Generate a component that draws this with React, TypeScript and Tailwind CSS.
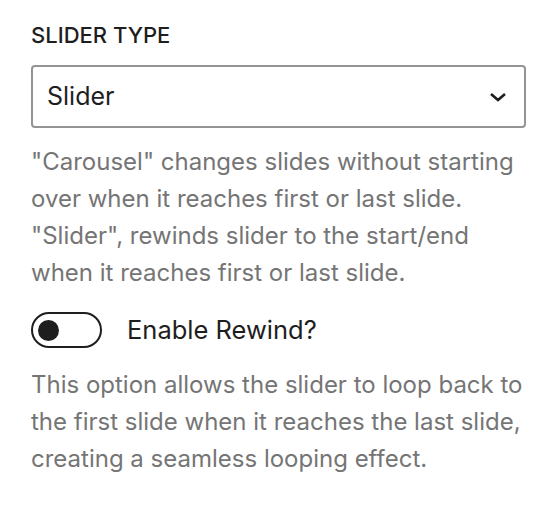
export default function App() {
  return (
    <div
      className="w-[554px] h-[518px] bg-white px-[31px] pt-[22px]"
      style={{ fontFamily: "Inter, 'Noto Sans', sans-serif" }}
    >
      <div className="text-[22px] font-medium uppercase text-[#1e1e1e] leading-[26px]">
        Slider Type
      </div>
      <div className="mt-[17px] w-[495px] h-[63px] rounded-[4px] border-2 border-[#949494] flex items-center pl-[14px] pr-[17px]">
        <span className="text-[25px] text-[#1e1e1e] flex-1">Slider</span>
        <svg width="18" height="10" viewBox="0 0 18 10" className="text-[#1e1e1e]">
          <path d="M2 2l7 6 7-6" fill="none" stroke="currentColor" strokeWidth="2.6" />
        </svg>
      </div>
      <p className="mt-[15px] text-[24px] leading-[37px] text-[#757575]">
        "Carousel" changes slides without starting over when it reaches first or last slide. "Slider", rewinds slider to
        the start/end when it reaches first or last slide.
      </p>
      <div className="mt-[20px] flex items-center">
        <div className="w-[71px] h-[36px] rounded-full border-2 border-[#1e1e1e] flex items-center px-[5px]">
          <div className="w-[21px] h-[21px] rounded-full bg-[#1e1e1e]" />
        </div>
        <span className="ml-[25px] text-[25.5px] text-[#1e1e1e]">Enable Rewind?</span>
      </div>
      <p className="mt-[17px] text-[24px] leading-[37px] text-[#757575]">
        This option allows the slider to loop back to the first slide when it reaches the last slide, creating a
        seamless looping effect.
      </p>
    </div>
  );
}
